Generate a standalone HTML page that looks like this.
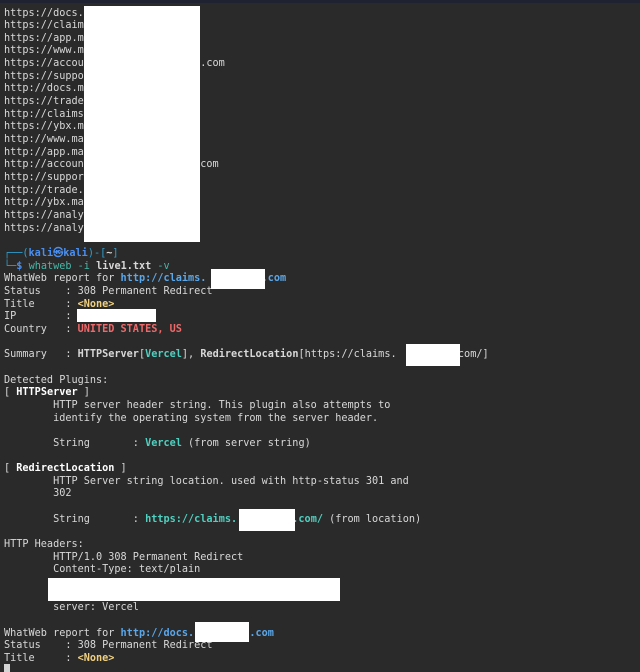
<!DOCTYPE html>
<html><head><meta charset="utf-8"><style>
html,body{margin:0;padding:0;background:#2a2a2a;width:640px;height:672px;overflow:hidden;position:relative}
.bar{position:absolute;left:0;top:0;width:640px;height:3px;background:#1f2230}
pre{position:absolute;left:4px;top:7.5px;margin:0;font-family:"DejaVu Sans Mono","Liberation Mono",monospace;font-size:10.2px;line-height:12.65px;color:#d8d8d8;tab-size:8}
b{font-weight:bold}
.u{color:#5aa7ea;font-weight:bold}
.c{color:#4fd0c0;font-weight:bold}
.r{color:#ee6a6a;font-weight:bold}
.y{color:#f0d080;font-weight:bold}
.w{color:#fff;font-weight:bold}
.pl{color:#2f9fcf}
.pk{color:#4a8ff0;font-weight:bold}
.cm{color:#45b8a8}
.box{position:absolute;background:#fff}
.cur{position:absolute;left:4px;top:664px;width:6px;height:8px;background:#d4d4d4}
</style></head><body>
<div class="bar"></div>
<pre>https://docs.
https://claim
https://app.m
https://www.m
https://accou                   .com
https://suppo
http://docs.m
https://trade
http://claims
https://ybx.m
http://www.ma
http://app.ma
http://accoun                  .com
http://suppor
http://trade.
http://ybx.ma
https://analy
https://analyt

<span class="pl">┌──(</span><span class="pk">kali㉿kali</span><span class="pl">)-[</span><b>~</b><span class="pl">]</span>
<span class="pl">└─</span><span class="pk">$</span> <span class="cm">whatweb</span> <span class="cm">-i</span> <b>live1.txt</b> <span class="cm">-v</span>
WhatWeb report for <span class="u">http://claims.         .com</span>
Status    : 308 Permanent Redirect
Title     : <span class="y">&lt;None&gt;</span>
IP        :
Country   : <span class="r">UNITED STATES, US</span>

Summary   : <b>HTTPServer</b>[<span class="c">Vercel</span>], <b>RedirectLocation</b>[https://claims.         .com/]

Detected Plugins:
[ <span class="w">HTTPServer</span> ]
	HTTP server header string. This plugin also attempts to
	identify the operating system from the server header.

	String       : <span class="c">Vercel</span> (from server string)

[ <span class="w">RedirectLocation</span> ]
	HTTP Server string location. used with http-status 301 and
	302

	String       : <span class="c">https://claims.         .com/</span> (from location)

HTTP Headers:
	HTTP/1.0 308 Permanent Redirect
	Content-Type: text/plain


	server: Vercel

WhatWeb report for <span class="u">http://docs.         .com</span>
Status    : 308 Permanent Redirect
Title     : <span class="y">&lt;None&gt;</span></pre>
<div class="box" style="left:84px;top:6px;width:116px;height:236px"></div>
<div class="box" style="left:211px;top:269px;width:54px;height:20px"></div>
<div class="box" style="left:77px;top:309px;width:79px;height:13px"></div>
<div class="box" style="left:406px;top:344px;width:54px;height:22px"></div>
<div class="box" style="left:239px;top:509px;width:56px;height:22px"></div>
<div class="box" style="left:48px;top:578px;width:292px;height:23px"></div>
<div class="box" style="left:195px;top:622px;width:54px;height:20px"></div>
<div class="cur"></div>
</body></html>
